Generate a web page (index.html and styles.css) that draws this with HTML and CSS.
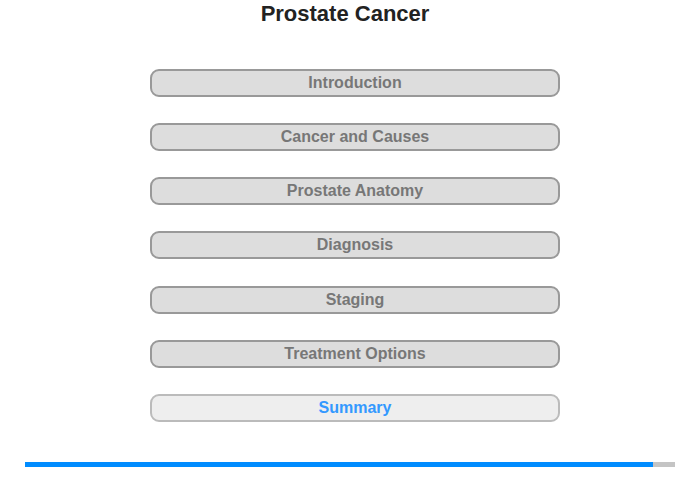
FILE: index.html
```
<!DOCTYPE html>
<html>
<head>
<meta charset="utf-8">
<link rel="stylesheet" href="styles.css">
</head>
<body>
<div class="page">
  <h1 class="title">Prostate Cancer</h1>
  <nav class="menu">
    <div class="item">Introduction</div>
    <div class="item">Cancer and Causes</div>
    <div class="item">Prostate Anatomy</div>
    <div class="item">Diagnosis</div>
    <div class="item">Staging</div>
    <div class="item">Treatment Options</div>
    <div class="item current">Summary</div>
  </nav>
  <div class="progress"><div class="fill" style="width: 96.6%"></div></div>
</div>
</body>
</html>
```
FILE: styles.css
```
html, body {
  margin: 0;
  padding: 0;
  background: #fff;
}
.page {
  width: 700px;
  height: 480px;
  font-family: "Liberation Sans", Arial, sans-serif;
  display: flex;
  flex-direction: column;
}
.title {
  margin: 0;
  padding-top: 1px;
  font-size: 22px;
  line-height: 25px;
  font-weight: bold;
  color: #222;
  text-align: center;
  width: 690px;
}
.menu {
  margin-top: 43px;
  margin-left: 150px;
  width: 410px;
  display: flex;
  flex-direction: column;
  gap: 26.17px;
}
.item {
  box-sizing: border-box;
  height: 28px;
  border: 2px solid #999;
  border-radius: 9px;
  background: #ddd;
  color: #777;
  font-size: 16px;
  font-weight: bold;
  line-height: 24px;
  text-align: center;
}
.item.current {
  background: #eee;
  border-color: #bbb;
  color: #3399ff;
}
.progress {
  margin-top: 40px;
  margin-left: 25px;
  width: 650px;
  height: 5px;
  background: #c4c4c4;
}
.fill {
  height: 100%;
  background: #008cff;
}
```
